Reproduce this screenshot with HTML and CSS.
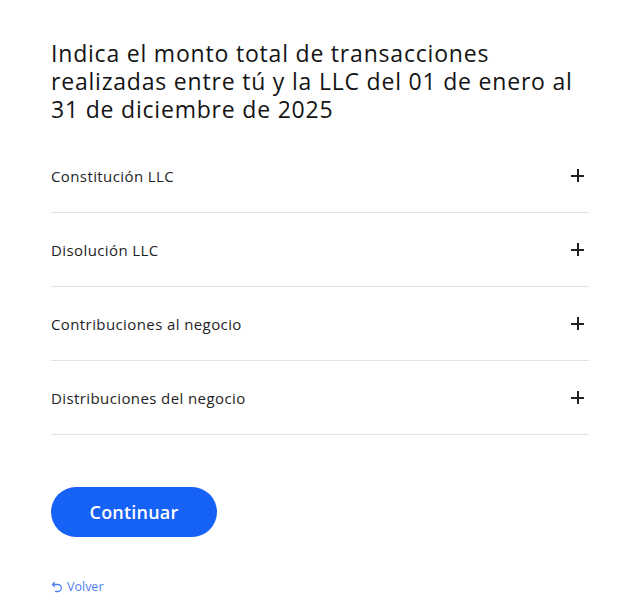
FILE: index.html
```html
<!DOCTYPE html>
<html lang="es">
<head>
    <meta charset="UTF-8">
    <meta name="viewport" content="width=device-width, initial-scale=1.0">
    <title>Transacciones LLC</title>
    <link rel="stylesheet" href="styles.css">
</head>
<body>
    <main class="page">
        <h1 class="title">Indica el monto total de transacciones realizadas entre tú y la LLC del 01 de enero al 31 de diciembre de 2025</h1>

        <div class="accordion">
            <div class="acc-item">
                <span class="acc-label">Constitución LLC</span>
                <span class="acc-plus"></span>
            </div>
            <div class="acc-item">
                <span class="acc-label">Disolución LLC</span>
                <span class="acc-plus"></span>
            </div>
            <div class="acc-item">
                <span class="acc-label">Contribuciones al negocio</span>
                <span class="acc-plus"></span>
            </div>
            <div class="acc-item">
                <span class="acc-label">Distribuciones del negocio</span>
                <span class="acc-plus"></span>
            </div>
        </div>

        <button class="btn" type="button">Continuar</button>

        <a class="back" href="#">
            <svg width="12" height="12" viewBox="0 0 12 12" fill="none" stroke="currentColor" stroke-width="1.3" stroke-linecap="round" stroke-linejoin="round">
                <path d="M3.5 1.5 1.5 3.5 3.5 5.5"/>
                <path d="M1.8 3.5h5a3.5 3.5 0 0 1 0 7H4.5"/>
            </svg>
            Volver
        </a>
    </main>
</body>
</html>
```

FILE: styles.css
```css
body { margin: 0; background: #fff; font-family: "Open Sans", Lato, sans-serif; color: #141414; }
.page { width: 538px; padding: 39px 0 0 51px; }
.title { max-width: 530px; margin: 0 0 16px; font-size: 23px; font-weight: 500; line-height: 28px; letter-spacing: 0.8px; }
.acc-item { display: flex; align-items: center; justify-content: space-between; height: 73px; border-bottom: 1px solid #e2e2e2; }
.acc-label { font-size: 15px; color: #1e1e1e; letter-spacing: 0.4px; }
.acc-plus { position: relative; width: 13px; height: 13px; margin-right: 5px; }
.acc-plus::before, .acc-plus::after { content: ""; position: absolute; background: #222; }
.acc-plus::before { left: 0; top: 6px; width: 13px; height: 1.5px; }
.acc-plus::after { top: 0; left: 6px; width: 1.5px; height: 13px; }
.btn { display: block; margin-top: 52px; width: 166px; height: 50px; border: none; border-radius: 25px; background: #1662f6; color: #fff; font-family: inherit; font-size: 18px; font-weight: 600; letter-spacing: 0.2px; cursor: pointer; }
.back { display: inline-flex; align-items: center; gap: 4px; margin-top: 41px; font-size: 12.5px; color: #4d7ff2; text-decoration: none; }
```
